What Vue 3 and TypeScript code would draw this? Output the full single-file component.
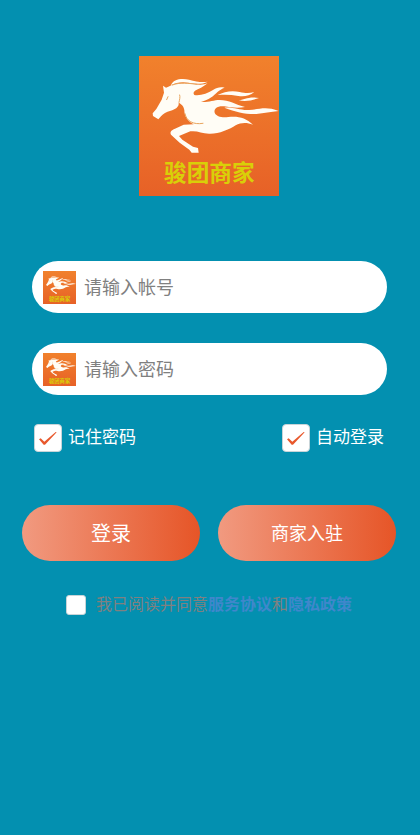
<script setup lang="ts">
import { ref } from 'vue'

interface Field {
  id: string
  type: string
  label: string
}

const fields: Field[] = [
  { id: 'account', type: 'text', label: '请输入帐号' },
  { id: 'password', type: 'password', label: '请输入密码' },
]

const values = ref<Record<string, string>>({ account: '', password: '' })

const options = ref([
  { id: 'remember', label: '记住密码', checked: true },
  { id: 'auto-login', label: '自动登录', checked: true },
])

const agreed = ref(false)
</script>

<template>
  <main class="page">
    <svg class="defs" aria-hidden="true">
      <defs>
        <linearGradient id="brand-bg" x1="0" y1="0" x2="0" y2="1">
          <stop offset="0" stop-color="#f1812c" />
          <stop offset="1" stop-color="#e76127" />
        </linearGradient>
        <symbol id="brand" viewBox="16 17 420 420">
          <rect x="16" y="17" width="420" height="420" fill="url(#brand-bg)" />
          <!-- head, neck, body and foreleg -->
          <path
            fill="#fffdf6"
            d="M88 106 L97 112 L104 109 C124 99 150 97 178 101 C196 104 212 104 222 99
               C210 109 194 117 184 121 C178 126 179 130 182 134 C200 137 222 129 238 119
               C250 111 260 109 273 112 C256 118 246 131 233 141 C222 149 210 153 202 155
               C226 156 240 149 258 149 C286 149 306 163 334 170 C312 175 290 171 272 168
               C252 166 240 174 243 187 C248 199 264 202 284 200 C316 197 336 203 358 223
               C340 216 322 216 306 225 C284 239 256 251 226 250 C204 249 190 240 170 243
               L136 257 L146 268 L178 289 L193 293 L195 307 L174 307 L167 298
               L138 277 L112 253 C108 244 113 240 124 235 L150 223 L180 222
               C160 212 152 196 152 180 C151 168 143 161 135 157
               C137 170 124 177 111 181 C97 185 89 190 82 198 L74 207 L58 197
               L57 189 L68 176 L84 148 L91 127 Z"
          />
          <!-- mane and tail strands -->
          <path
            fill="#fffdf6"
            d="M112 105 C118 86 144 83 166 88 C188 94 204 97 222 94
               C204 103 184 101 164 97 C144 93 126 97 112 105 Z
               M252 134 C272 123 296 120 318 125 C336 129 348 129 362 125
               C348 137 332 139 314 137 C294 133 274 132 252 134 Z
               M314 150 C332 148 346 137 376 143 C358 149 340 155 314 150 Z
               M272 172 C302 170 320 181 346 179 C376 177 398 167 435 182
               C410 184 392 189 368 191 C334 192 308 185 272 172 Z"
          />
          <path
            fill="none"
            stroke="#e9a65f"
            stroke-width="3"
            stroke-linecap="round"
            d="M136 156 C138 146 140 141 138 134 M154 190 C158 212 178 224 208 219
               M99 148 L103 139 M116 104 C138 95 166 99 190 102"
          />
          <text
            x="227"
            y="393"
            text-anchor="middle"
            font-family="'Noto Sans CJK SC', sans-serif"
            font-size="68"
            font-weight="700"
            fill="#d9cf08"
          >骏团商家</text>
        </symbol>
      </defs>
    </svg>

    <svg class="logo" role="img" aria-label="骏团商家"><use href="#brand" /></svg>

    <form class="form" @submit.prevent>
      <div class="fields">
        <label v-for="field in fields" :key="field.id" class="field" :for="field.id">
          <svg class="field-icon" aria-hidden="true"><use href="#brand" /></svg>
          <input
            :id="field.id"
            v-model="values[field.id]"
            class="field-input"
            :type="field.type"
            :placeholder="field.label"
            :aria-label="field.label"
          />
        </label>
      </div>

      <div class="options">
        <label v-for="option in options" :key="option.id" class="option" :for="option.id">
          <span class="tick">
            <input :id="option.id" v-model="option.checked" class="box" type="checkbox" />
            <svg v-if="option.checked" class="mark" viewBox="0 0 84 84" aria-hidden="true">
              <path fill="#e8582c" d="M15 46 L20 43 L31 53 L65 24 L68 25 L33 62 L29 62 Z" />
            </svg>
          </span>
          <span>{{ option.label }}</span>
        </label>
      </div>

      <div class="actions">
        <button class="action primary" type="submit">登录</button>
        <button class="action" type="button">商家入驻</button>
      </div>

      <div class="agreement">
        <input id="agree" v-model="agreed" class="box small" type="checkbox" />
        <p class="terms">
          <label for="agree">我已阅读并同意</label><a href="#service">服务协议</a>和<a href="#privacy">隐私政策</a>
        </p>
      </div>
    </form>
  </main>
</template>

<style>
body {
  background: #0390b0;
}
</style>

<style scoped>
.page {
  box-sizing: border-box;
  min-height: 100vh;
  padding: 56px 24px 32px 22px;
  display: flex;
  flex-direction: column;
  align-items: center;
  background: #0390b0;
  font-family: 'Noto Sans CJK SC', sans-serif;
}

.defs {
  position: absolute;
  width: 0;
  height: 0;
}

.logo {
  display: block;
  width: 140px;
  height: 140px;
}

.form {
  width: 100%;
  margin-top: 65px;
}

.fields {
  display: flex;
  flex-direction: column;
  gap: 30px;
  padding: 0 9px 0 10px;
}

.field {
  box-sizing: border-box;
  display: flex;
  align-items: center;
  gap: 8px;
  height: 52px;
  padding: 0 24px 0 11px;
  border-radius: 26px;
  background: #fff;
}

.field-icon {
  flex: none;
  width: 33px;
  height: 33px;
}

.field-input {
  flex: 1;
  min-width: 0;
  height: 32px;
  padding: 0 0 2px;
  border: 0;
  outline: 0;
  background: transparent;
  color: #333;
  font-family: inherit;
  font-size: 18px;
}

.field-input::placeholder {
  color: #808080;
  opacity: 1;
}

.options {
  display: flex;
  justify-content: space-between;
  margin-top: 29px;
  padding: 0 12px;
}

.option {
  display: flex;
  align-items: flex-start;
  gap: 6px;
  color: #fff;
  font-size: 17px;
  line-height: 24px;
}

.tick {
  position: relative;
  display: flex;
}

.box {
  appearance: none;
  box-sizing: border-box;
  flex: none;
  width: 28px;
  height: 28px;
  margin: 0;
  border: 1px solid #c8d4d8;
  border-radius: 4px;
  background: #fff;
}

.mark {
  position: absolute;
  inset: 0;
  width: 100%;
  height: 100%;
  pointer-events: none;
}

.actions {
  display: flex;
  gap: 18px;
  margin-top: 53px;
}

.action {
  flex: 1;
  height: 56px;
  padding: 0 0 2px;
  border: 0;
  border-radius: 28px;
  background: linear-gradient(90deg, #f19a80, #e65527);
  color: #fff;
  font-family: inherit;
  font-size: 18px;
}

.primary {
  font-size: 20px;
}

.agreement {
  display: flex;
  align-items: flex-end;
  justify-content: center;
  gap: 10px;
  margin-top: 30px;
}

.small {
  width: 20px;
  height: 20px;
  border-radius: 3px;
}

.terms {
  margin: 0;
  color: #808080;
  font-size: 16px;
  line-height: 24px;
}

.terms a {
  color: #3f87cb;
  font-weight: 700;
  text-decoration: none;
}
</style>
